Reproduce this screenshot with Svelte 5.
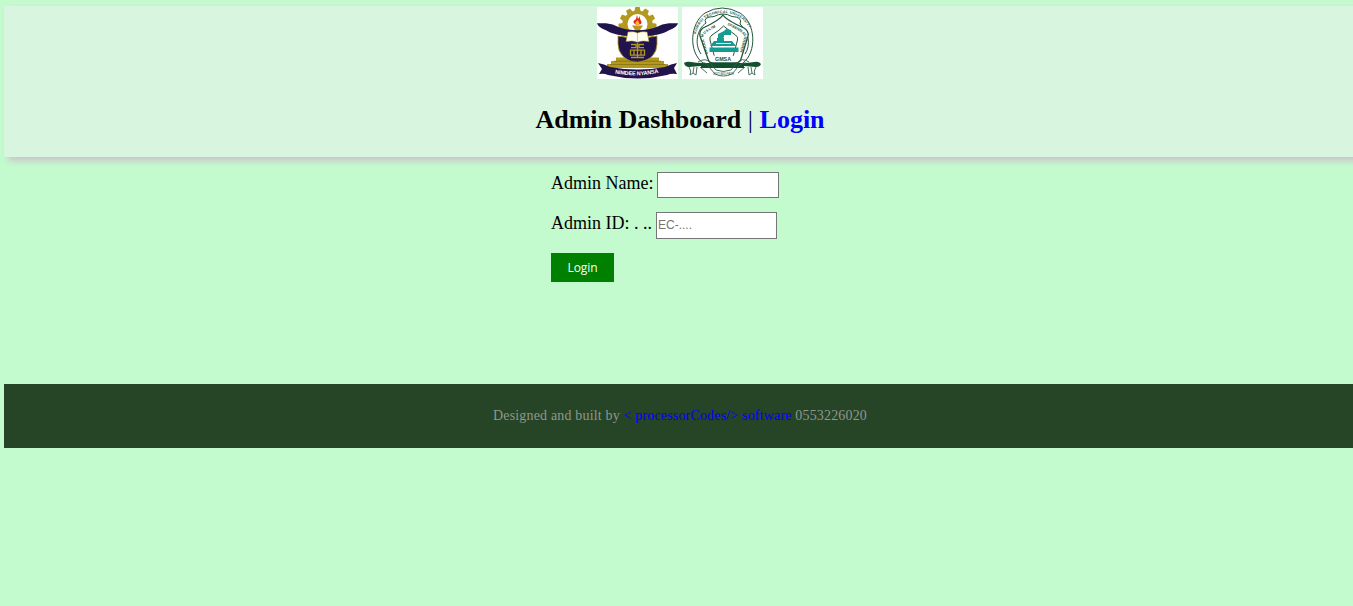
<script>
  let adminName = $state('');
  let adminId = $state('');
  const teeth = Array.from({ length: 12 }, (_, i) => i * 30);
</script>

<div class="page">
  <header>
    <div class="logos">
      <svg class="logo" viewBox="0 0 81 72">
        <rect width="81" height="72" fill="#fff" />
        <g fill="#b2981d">
          {#each teeth as angle}
            <path d="M37.500 4L38.300 0h4.400L43.500 4z" transform="rotate({angle} 40.5 19)" />
          {/each}
          <circle cx="40.5" cy="19" r="15.5" />
        </g>
        <circle cx="40.5" cy="17" r="10" fill="#fff" />
        <path d="M40 18c-5-2-4-4-1-6l1-4 1 4 2-3c-1 4 3 5 1 8z" fill="#e32c18" />
        <path d="M40 18c-3-2-1-3 1-5 0 3 3 3 0 5z" fill="#ffb52c" />
        <path d="M35 18.500h11l-4 6h-3z" fill="#b2981d" />
        <path d="M21 29q19.500 4 39 0v8q0 14-19.500 21Q21 51 21 37z" fill="#21134c" stroke="#b2981d" stroke-width=".8" />
        <path d="M0 16.300h9q7 .5 13 4 8 3 18.500 3T59 20.300q6-3.500 13-4h9q-1 4-9 7-8 5.500-31.500 6.500Q17 28.800 9 23.300 1 20.300 0 16.300z" fill="#21134c" />
        <path d="M31 25q6-1 9.500 1 4-2 9.500-1l2 9.500q-7-1.500-11.500.8Q36 33 29 34.500z" fill="#fffdf0" stroke="#b2981d" stroke-width=".5" />
        <path d="M40.500 26v9" stroke="#c9b862" stroke-width=".7" />
        <g fill="none" stroke="#b2981d" stroke-width="1.300">
          <path d="M40.500 36v15M34 37.500h5v3.200h-5M47 37.500h-5v3.200h5M33.500 43.200h14v5h-14zM37 43v5M44 43v5M34 50.500h13" />
        </g>
        <path d="M19 50.500h8q7 4 13.500 4.500Q47 54 54 50.500h8V54h5v3h4v4H10v-4h4v-3h5z" fill="#b2981d" />
        <path d="M17 54.200h47M13 57.500h55" stroke="#806b13" stroke-width=".7" />
        <path d="M1 56q6 1 12 4 28 5 55 0 6-3 12-4l-3 5 3 6q-6-1-10 1-29 7-59 0-4-2-9-1l3-5z" fill="#21134c" />
        <path id="motto-line" d="M18 66.500q23 4 45-1" fill="none" />
        <text class="motto"><textPath href="#motto-line" textLength="44">NIMDEE NYANSA</textPath></text>
      </svg>
      <svg class="logo" viewBox="0 0 81 72">
        <rect width="81" height="72" fill="#fff" />
        <g fill="none" stroke="#24573b">
          <path d="M21 56C6 45 8 16 23 6Q40-4 58 6c16 10 17 39 3 50" stroke-width="1" />
          <path d="M19 47C12 37 15 22 24 16Q20 10 32 9.500q9-5 18 0 11 .5 8 7.500c9 8 11 21 5 30" stroke-width="1" />
          <path d="M41 8q3 5 21 13 5 3 4 8l-7 23q-1 4-6 4H31q-4 0-5-4l-8-23q-1-5 3-8Q38 13 41 8z" fill="#fff" stroke-width="1.300" />
          <path d="M41.500 19q5 4 12 9 3 2 2 5l-4 15q-1 3-4 3H36q-3 0-4-3l-4-15q-1-3 2-5 8-5 11.500-9z" stroke-width="1" />
        </g>
        <path id="outer-arc" d="M14 27C19-1 63-1 69 27" fill="none" />
        <path id="left-arc" d="M26 47L21.500 31Q20 26 37 18.500" fill="none" />
        <path id="right-arc" d="M45 18Q64 26 62 31L57 48" fill="none" />
        <text class="seal"><textPath href="#outer-arc" textLength="69">KUMASI TECHNICAL UNIVERSITY</textPath></text>
        <text class="seal small"><textPath href="#left-arc" textLength="34">GHANA MUSLIM</textPath></text>
        <text class="seal small"><textPath href="#right-arc" textLength="37">STUDENTS ASSOCIATION</textPath></text>
        <g fill="#159b91">
          <path d="M44 22l5 1v5h-7v-4zM36 27l6-3v6l-2 2h-4z" />
          <path d="M35 31h7v3h-7zM32 34h18l4 5H28zM27.500 40.500h29v4.500h-29z" />
        </g>
        <path d="M34 36.500h15" stroke="#fff" stroke-width=".9" />
        <path d="M32 48.500h19v5.500H32z" fill="#fff" />
        <text class="initials" x="33" y="53.500" textLength="16" lengthAdjust="spacingAndGlyphs">GMSA</text>
        <path d="M2 56q3-2 7-1 5 1 12 1h39q7 0 12-1 5-1 7 2-1 3-5 3l-12-1v2H19v-2L7 60q-4 0-5-4z" fill="#124f2c" />
        <g fill="none" stroke="#34644c" stroke-width=".9">
          <path d="M16 55q8-5 12 1l6 7q7 3 15 0l6-7q5-6 12-1M20 56q5-1 7 4l6 7q8 4 17 0l6-7q3-5 8-4" />
          <path d="M7 60q3 4 1 8l3-2 3 2 1-8M12 60l-1 6M74 60q-3 4-1 8l-3-2-3 2-1-8M69 60l1 6M18 60l7 6M63 60l-7 6" />
        </g>
        <text class="banner" x="31" y="68" textLength="21">UNITY AND FAITH</text>
      </svg>
    </div>
    <h1>Admin Dashboard <span class="bar">|</span> <a href="#login">Login</a></h1>
  </header>

  <form onsubmit={(e) => e.preventDefault()}>
    <div class="row"><label for="name">Admin Name:</label><input id="name" bind:value={adminName} /></div>
    <div class="row second"><label for="id">Admin ID: . ..</label><input id="id" placeholder="EC-...." bind:value={adminId} /></div>
    <button>Login</button>
  </form>

  <footer>
    <p>Designed and built by <a href="#software">&lt; processorCodes/&gt; software</a> 0553226020</p>
  </footer>
</div>

<style>
  :global(body) {
    margin: 0;
    background: #c3face;
    overflow: hidden;
  }
  .page {
    width: 1352px;
    padding: 6px 0 0 4px;
    font-family: "Liberation Serif", "Times New Roman", serif;
  }
  header {
    box-sizing: border-box;
    height: 151px;
    padding-top: 1px;
    background: #d8f6df;
    box-shadow: 4px 4px 6px #cbc5cb;
  }
  .logos {
    display: flex;
    justify-content: center;
    gap: 4px;
  }
  .logo {
    display: block;
    width: 81px;
    height: 72px;
  }
  .motto {
    font: bold 5.500px "Liberation Sans", sans-serif;
    fill: #fff;
  }
  .seal {
    font: bold 3.800px "Liberation Sans", sans-serif;
    fill: #24573b;
  }
  .small {
    font-size: 3.600px;
  }
  .initials {
    font: bold 5.500px "Liberation Sans", sans-serif;
    fill: #174f32;
  }
  .banner {
    font: 2.800px "Liberation Sans", sans-serif;
    fill: #34644c;
  }
  h1 {
    margin: 26px 0 0;
    font-size: 26px;
    line-height: 30px;
    text-align: center;
    white-space: nowrap;
  }
  .bar {
    font-weight: 400;
    color: #000050;
  }
  a {
    color: #00f;
    text-decoration: none;
  }
  form {
    box-sizing: border-box;
    height: 227px;
    padding: 15px 0 0 547px;
  }
  .row {
    display: flex;
    gap: 4px;
    height: 26px;
    font-size: 18px;
    line-height: 23px;
  }
  .row label {
    width: 102px;
    white-space: nowrap;
  }
  .second {
    margin-top: 14px;
    height: 27px;
  }
  .second label {
    width: 101px;
  }
  input {
    box-sizing: border-box;
    width: 122px;
    height: 100%;
    margin: 0;
    padding: 0 1px 2px;
    border: 1px solid #767676;
    border-radius: 0;
    background: #fff;
    font: 12px "Liberation Sans", Arial, sans-serif;
  }
  .second input {
    width: 121px;
  }
  input::placeholder {
    color: #757575;
  }
  button {
    display: block;
    width: 63px;
    height: 29px;
    margin: 14px 0 0;
    padding: 0;
    border: 0;
    background: #008000;
    color: #fff;
    font: 500 12px "Open Sans", sans-serif;
    letter-spacing: -0.1px;
  }
  footer {
    display: flex;
    align-items: center;
    justify-content: center;
    height: 64px;
    background: #264426;
    color: #909690;
  }
  footer p {
    margin: 0;
    font-size: 14px;
    line-height: 16px;
    letter-spacing: 0.17px;
    white-space: nowrap;
  }
</style>
